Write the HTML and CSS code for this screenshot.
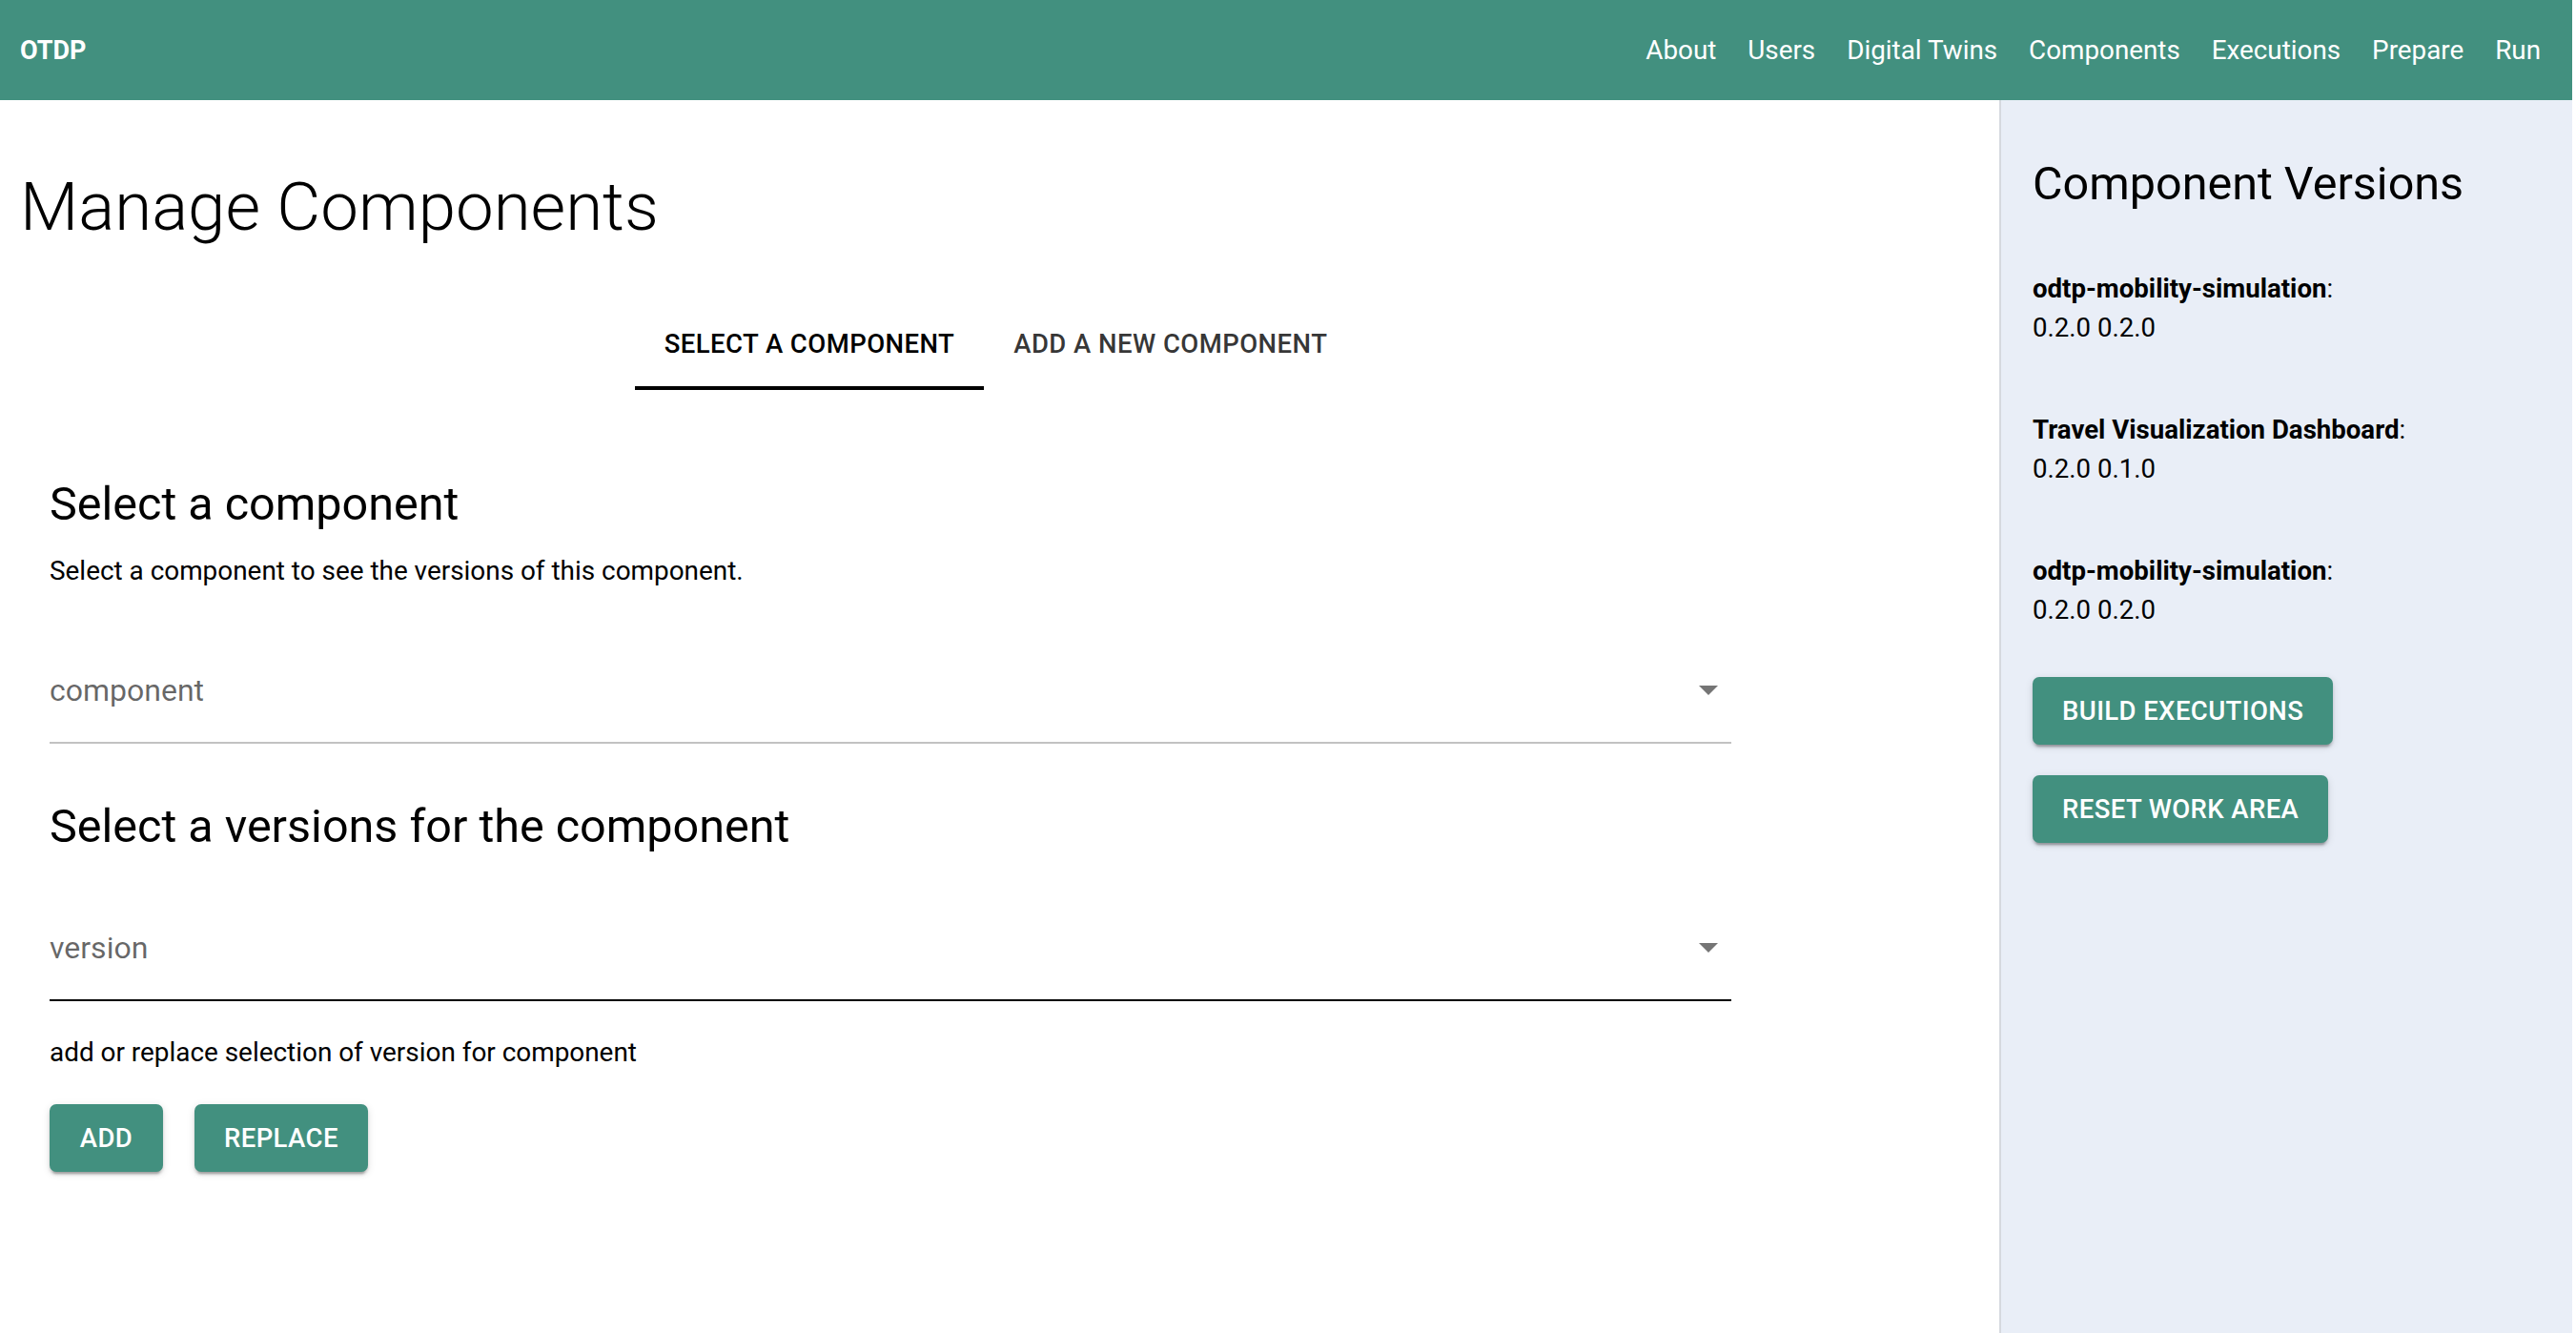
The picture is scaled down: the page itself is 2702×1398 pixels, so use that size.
FILE: index.html
```html
<!DOCTYPE html>
<html lang="en">
<head>
<meta charset="utf-8">
<title>OTDP - Manage Components</title>
<link rel="stylesheet" href="styles.css">
</head>
<body>
<div class="app">
  <header class="topbar">
    <div class="brand">OTDP</div>
    <nav class="nav">
      <a class="nav-link">About</a>
      <a class="nav-link">Users</a>
      <a class="nav-link">Digital Twins</a>
      <a class="nav-link">Components</a>
      <a class="nav-link">Executions</a>
      <a class="nav-link">Prepare</a>
      <a class="nav-link">Run</a>
    </nav>
  </header>
  <div class="layout">
    <main class="main">
      <h1 class="title">Manage Components</h1>
      <div class="tabs">
        <div class="tab tab-active">Select a component</div>
        <div class="tab">Add a new component</div>
      </div>
      <section class="form">
        <h2 class="heading heading-first">Select a component</h2>
        <p class="desc">Select a component to see the versions of this component.</p>
        <div class="field field-first">
          <span class="field-label">component</span>
          <svg class="field-arrow" width="20" height="10" viewBox="0 0 20 10"><polygon points="0,0 20,0 10,10" fill="#757575"/></svg>
        </div>
        <h2 class="heading heading-second">Select a versions for the component</h2>
        <div class="field field-second">
          <span class="field-label">version</span>
          <svg class="field-arrow" width="20" height="10" viewBox="0 0 20 10"><polygon points="0,0 20,0 10,10" fill="#757575"/></svg>
        </div>
        <p class="hint">add or replace selection of version for component</p>
        <div class="actions">
          <button class="btn btn-add">Add</button>
          <button class="btn">Replace</button>
        </div>
      </section>
    </main>
    <aside class="panel">
      <h2 class="panel-title">Component Versions</h2>
      <div class="entries">
        <div class="entry"><b>odtp-mobility-simulation</b>:<br>0.2.0 0.2.0</div>
        <div class="entry"><b>Travel Visualization Dashboard</b>:<br>0.2.0 0.1.0</div>
        <div class="entry"><b>odtp-mobility-simulation</b>:<br>0.2.0 0.2.0</div>
      </div>
      <div class="panel-actions">
        <button class="btn">Build executions</button>
        <button class="btn">Reset work area</button>
      </div>
    </aside>
  </div>
</div>
</body>
</html>
```

FILE: styles.css
```css
* { box-sizing: border-box; }
html, body { margin: 0; height: 100%; }
body {
  font-family: Roboto, "Noto Sans", "Liberation Sans", sans-serif;
  color: #000;
  background: #fff;
}
.app {
  display: flex;
  flex-direction: column;
  height: 100vh;
  width: calc(100% - 4px);
}
.topbar {
  height: 105px;
  flex: 0 0 105px;
  background: #42907f;
  color: #fff;
  display: flex;
  align-items: center;
  justify-content: space-between;
  padding: 0 33px 0 21px;
}
.brand { font-size: 27px; font-weight: 700; }
.nav { display: flex; gap: 33px; font-size: 27.8px; }
.nav-link { color: #fff; text-decoration: none; }

.layout { flex: 1; display: flex; min-height: 0; }
.main { flex: 1; padding: 0 21px; }
.title {
  margin: 69px 0 0;
  font-size: 70.8px;
  font-weight: 300;
  line-height: 86px;
}
.tabs { display: flex; justify-content: center; margin-top: 66px; padding-right: 8px; }
.tab {
  height: 83px;
  padding: 0 31px 11px;
  display: flex;
  align-items: center;
  font-size: 27.5px;
  font-weight: 500;
  letter-spacing: 0.45px;
  text-transform: uppercase;
  color: rgba(0,0,0,0.8);
  border-bottom: 4px solid transparent;
}
.tab-active { color: #000; border-bottom-color: #000; }

.form { width: 1764px; margin-left: 31px; }
.heading {
  margin: 0;
  font-size: 48.5px;
  font-weight: 400;
  line-height: 58px;
}
.heading-first { margin-top: 91px; }
.heading-second { margin-top: 58px; }
.desc, .hint {
  margin: 0;
  font-size: 27.9px;
  line-height: 41px;
}
.desc { margin-top: 19.5px; }
.field {
  height: 100px;
  padding-bottom: 10px;
  display: flex;
  align-items: center;
  justify-content: space-between;
  border-bottom: 2px solid #c2c2c2;
}
.field-first { margin-top: 61.5px; }
.field-second { margin-top: 54px; border-bottom-color: #000; }
.field-label { font-size: 32px; color: rgba(0,0,0,0.6); }
.field-arrow { margin-right: 14px; }
.hint { margin-top: 32.5px; }
.actions { display: flex; gap: 33px; margin-top: 34.5px; }

.btn {
  height: 71px;
  padding: 0 31px;
  border: none;
  border-radius: 7px;
  background: #42907f;
  color: #fff;
  font-family: inherit;
  font-size: 27.5px;
  font-weight: 500;
  letter-spacing: 0.4px;
  text-transform: uppercase;
  box-shadow: 0 5px 2px -3px rgba(0,0,0,0.2), 0 3px 3px 0 rgba(0,0,0,0.14), 0 2px 8px 0 rgba(0,0,0,0.12);
}
.btn-add { min-width: 119px; }

.panel {
  width: 601px;
  flex: 0 0 601px;
  background: #e9eef7;
  border-left: 2px solid #d6d9df;
  padding: 59px 33px 0;
}
.panel-title {
  margin: 0;
  font-size: 48.5px;
  font-weight: 400;
  line-height: 58px;
}
.entries { margin-top: 59.5px; }
.entry { font-size: 27.6px; line-height: 41.5px; margin-bottom: 65px; }
.entry:last-child { margin-bottom: 0; }
.entry b { font-weight: 700; }
.panel-actions {
  margin-top: 49.5px;
  display: flex;
  flex-direction: column;
  align-items: flex-start;
  gap: 32px;
}
```
